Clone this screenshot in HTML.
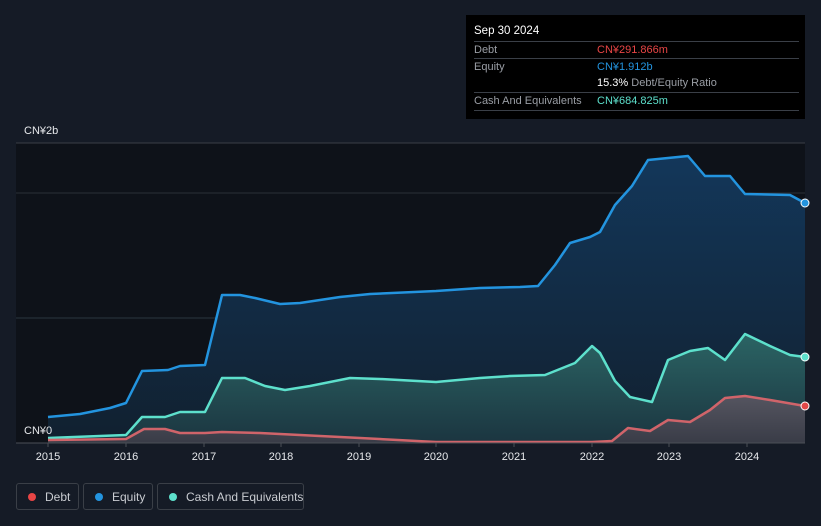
<!DOCTYPE html><html><head><style>
body{margin:0;width:821px;height:526px;background:#151b26;font-family:"Liberation Sans",sans-serif;overflow:hidden;position:relative}
.tt{position:absolute;left:466px;top:15px;width:339px;height:104px;background:#000;color:#fff;font-size:11px}
.tt .h{position:absolute;left:8px;top:10px;font-size:11.5px}
.row{position:absolute;left:8px;width:325px;border-top:1px solid #3a3f47;height:17px;line-height:17px}
.l{position:absolute;left:0;color:#9a9ea5}.v{position:absolute;left:123px;white-space:nowrap}
.leg{position:absolute;top:483px;height:27px;border:1px solid #3a3f47;border-radius:3px;color:#c9ccd1;font-size:12px;line-height:26px;box-sizing:border-box;white-space:nowrap}
.dot{display:inline-block;width:8px;height:8px;border-radius:50%;margin:0 9px 0 11px;vertical-align:0px}
.ax{position:absolute;top:451px;color:#e6e8eb;font-size:11px;transform:translateX(-50%)}
</style></head><body>
<svg width="821" height="526" style="position:absolute;left:0;top:0">
<defs>
<linearGradient id="ge" x1="0" y1="0" x2="0" y2="1"><stop offset="0" stop-color="#13375a"/><stop offset="1" stop-color="#11202f"/></linearGradient>
<linearGradient id="gc" x1="0" y1="0" x2="0" y2="1"><stop offset="0" stop-color="#2b6464"/><stop offset="1" stop-color="#1b3540"/></linearGradient>
<linearGradient id="gd" x1="0" y1="0" x2="0" y2="1"><stop offset="0" stop-color="#555560"/><stop offset="1" stop-color="#393c47"/></linearGradient>
</defs>
<rect x="16" y="143" width="789" height="300" fill="#0e1219"/>
<line x1="16" y1="143" x2="805" y2="143" stroke="#3a3f47"/>
<line x1="16" y1="193" x2="805" y2="193" stroke="#2a3038"/>
<line x1="16" y1="318" x2="805" y2="318" stroke="#2a3540"/>
<path d="M48,417 L80,414 L110,408 L126,403 L142,371 L168,370 L180,366 L205,365 L222,295 L240,295 L255,298 L280,304 L300,303 L340,297 L370,294 L436,291 L480,288 L520,287 L538,286 L555,265 L570,243 L590,237 L600,232 L615,205 L632,186 L648,160 L668,158 L688,156 L705,176 L730,176 L745,194 L790,195 L805,203 L805,443 L48,443Z" fill="url(#ge)"/>
<path d="M48,438 L126,435 L142,417 L165,417 L180,412 L205,412 L222,378 L245,378 L265,386 L285,390 L310,386 L350,378 L380,379 L436,382 L480,378 L510,376 L545,375 L575,363 L592,346 L600,353 L615,381 L630,397 L652,402 L668,360 L690,351 L708,348 L725,360 L745,334 L770,346 L790,355 L805,357 L805,443 L48,443Z" fill="url(#gc)"/>
<path d="M48,440 L126,439 L144,429 L165,429 L180,433 L205,433 L222,432 L260,433 L300,435 L360,438 L436,442 L592,442 L612,441 L628,428 L650,431 L668,420 L690,422 L710,410 L725,398 L745,396 L770,400 L805,406 L805,443 L48,443Z" fill="url(#gd)"/>
<g fill="none" stroke-width="2.5" stroke-linejoin="round">
<path d="M48,417 L80,414 L110,408 L126,403 L142,371 L168,370 L180,366 L205,365 L222,295 L240,295 L255,298 L280,304 L300,303 L340,297 L370,294 L436,291 L480,288 L520,287 L538,286 L555,265 L570,243 L590,237 L600,232 L615,205 L632,186 L648,160 L668,158 L688,156 L705,176 L730,176 L745,194 L790,195 L805,203" stroke="#2394df"/>
<path d="M48,438 L126,435 L142,417 L165,417 L180,412 L205,412 L222,378 L245,378 L265,386 L285,390 L310,386 L350,378 L380,379 L436,382 L480,378 L510,376 L545,375 L575,363 L592,346 L600,353 L615,381 L630,397 L652,402 L668,360 L690,351 L708,348 L725,360 L745,334 L770,346 L790,355 L805,357" stroke="#5de0cc"/>
<path d="M48,440 L126,439 L144,429 L165,429 L180,433 L205,433 L222,432 L260,433 L300,435 L360,438 L436,442 L592,442 L612,441 L628,428 L650,431 L668,420 L690,422 L710,410 L725,398 L745,396 L770,400 L805,406" stroke="#d0646a"/>
</g>
<line x1="16" y1="443" x2="805" y2="443" stroke="#4a4f57"/>
<g stroke="#4a4f57"><line x1="48" y1="443" x2="48" y2="447"/><line x1="126" y1="443" x2="126" y2="447"/><line x1="204" y1="443" x2="204" y2="447"/><line x1="281" y1="443" x2="281" y2="447"/><line x1="359" y1="443" x2="359" y2="447"/><line x1="436" y1="443" x2="436" y2="447"/><line x1="514" y1="443" x2="514" y2="447"/><line x1="592" y1="443" x2="592" y2="447"/><line x1="669" y1="443" x2="669" y2="447"/><line x1="747" y1="443" x2="747" y2="447"/></g>
<circle cx="805" cy="203" r="4" fill="#2394df" stroke="#fff"/>
<circle cx="805" cy="357" r="4" fill="#5de0cc" stroke="#fff"/>
<circle cx="805" cy="406" r="4" fill="#e04848" stroke="#fff"/>
</svg>
<div style="position:absolute;left:24px;top:125px;color:#e6e8eb;font-size:11px">CN¥2b</div>
<div style="position:absolute;left:24px;top:425px;color:#e6e8eb;font-size:11px">CN¥0</div>
<div class="ax" style="left:48px">2015</div><div class="ax" style="left:126px">2016</div><div class="ax" style="left:204px">2017</div><div class="ax" style="left:281px">2018</div><div class="ax" style="left:359px">2019</div><div class="ax" style="left:436px">2020</div><div class="ax" style="left:514px">2021</div><div class="ax" style="left:592px">2022</div><div class="ax" style="left:669px">2023</div><div class="ax" style="left:747px">2024</div>
<div class="tt"><div class="h">Sep 30 2024</div>
<div class="row" style="top:26px"><span class="l">Debt</span><span class="v" style="color:#e84545">CN¥291.866m</span></div>
<div class="row" style="top:43px"><span class="l">Equity</span><span class="v" style="color:#2394df">CN¥1.912b</span></div>
<div class="row" style="top:60px;border:0"><span class="v"><b style="font-weight:normal;color:#fff">15.3%</b> <span style="color:#9a9ea5">Debt/Equity Ratio</span></span></div>
<div class="row" style="top:77px;border-bottom:1px solid #3a3f47"><span class="l">Cash And Equivalents</span><span class="v" style="color:#5de0cc">CN¥684.825m</span></div>
</div>
<div class="leg" style="left:16px;width:63px"><span class="dot" style="background:#e84545"></span>Debt</div>
<div class="leg" style="left:83px;width:70px"><span class="dot" style="background:#2394df"></span>Equity</div>
<div class="leg" style="left:157px;width:147px"><span class="dot" style="background:#5de0cc"></span>Cash And Equivalents</div>
</body></html>
